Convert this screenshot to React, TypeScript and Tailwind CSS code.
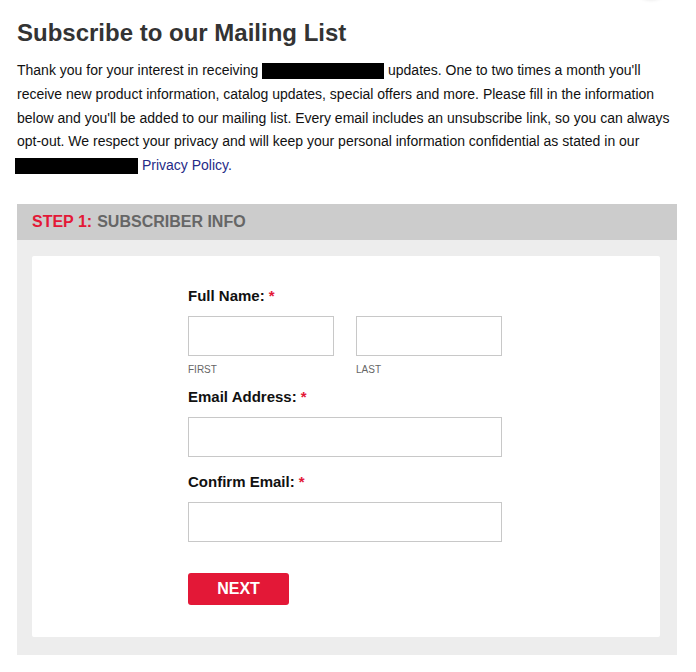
import React from "react";

export default function App() {
  return (
    <div
      className="relative min-h-[672px] w-[696px] overflow-hidden bg-white text-[#111]"
      style={{ fontFamily: '"Liberation Sans", Arial, sans-serif' }}
    >
      <div className="absolute left-[633px] top-[-38px] h-[36px] w-[36px] rounded-full bg-white shadow-[0_1px_4px_rgba(0,0,0,0.18)]" />
      <div className="pl-[17px] pr-[19px]">
        <h1 className="mt-[18px] text-[24px] font-bold leading-[29px] text-[#333]">
          Subscribe to our Mailing List
        </h1>
        <p className="mt-[12px] text-[14px] leading-[23.75px] text-[#111]">
          Thank you for your interest in receiving{" "}
          <span className="inline-block h-[16px] w-[122px] bg-black align-[-4px]" />{" "}
          updates. One to two times a month you'll receive new product information, catalog
          updates, special offers and more. Please fill in the information below and you'll be
          added to our mailing list. Every email includes an unsubscribe link, so you can always
          opt-out. We respect your privacy and will keep your personal information confidential
          as stated in our{" "}
          <span className="-ml-[2px] inline-block h-[16px] w-[123px] bg-black align-[-4px]" />{" "}
          <a className="text-[#262b87]">Privacy Policy</a>
          <span className="text-[#262b87]">.</span>
        </p>

        <div className="mt-[26px] w-[660px]">
          <div className="flex h-[36px] items-center bg-[#cccccc] px-[15px] text-[16px] font-bold">
            <span className="text-[#e31837]">STEP 1:</span>
            <span className="ml-[5px] text-[#666]">SUBSCRIBER INFO</span>
          </div>
          <div className="bg-[#ededed] pb-[18px] pl-[15px] pr-[17px] pt-[16px]">
            <div className="rounded-[2px] bg-white pb-[32px] pl-[156px] pt-[30px]">
              <div className="w-[314px]">
                <div className="text-[15px] font-bold leading-[20px] text-[#111]">
                  Full Name: <span className="text-[#e31837]">*</span>
                </div>
                <div className="mt-[10px] flex gap-[22px]">
                  <div className="w-[146px]">
                    <input className="block h-[40px] w-[146px] border border-[#c8c8c8] bg-white outline-none" />
                    <div className="mt-[8px] text-[10px] leading-[12px] text-[#666]">FIRST</div>
                  </div>
                  <div className="w-[146px]">
                    <input className="block h-[40px] w-[146px] border border-[#c8c8c8] bg-white outline-none" />
                    <div className="mt-[8px] text-[10px] leading-[12px] text-[#666]">LAST</div>
                  </div>
                </div>
                <div className="mt-[11px] text-[15px] font-bold leading-[20px] text-[#111]">
                  Email Address: <span className="text-[#e31837]">*</span>
                </div>
                <input className="mt-[10px] block h-[40px] w-[314px] border border-[#c8c8c8] bg-white outline-none" />
                <div className="mt-[15px] text-[15px] font-bold leading-[20px] text-[#111]">
                  Confirm Email: <span className="text-[#e31837]">*</span>
                </div>
                <input className="mt-[10px] block h-[40px] w-[314px] border border-[#c8c8c8] bg-white outline-none" />
                <button className="mt-[31px] flex h-[32px] w-[101px] items-center justify-center rounded-[3px] bg-[#e31837] text-[16px] font-bold text-white">
                  NEXT
                </button>
              </div>
            </div>
          </div>
        </div>
      </div>
    </div>
  );
}
